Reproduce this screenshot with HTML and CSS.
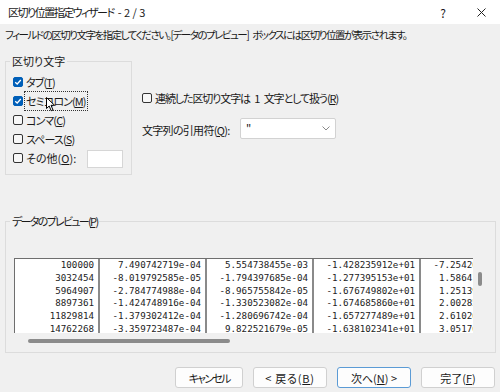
FILE: index.html
```html
<!DOCTYPE html>
<html lang="ja">
<head>
    <meta charset="UTF-8">
    <title>区切り位置指定ウィザード - 2 / 3</title>
    <link rel="stylesheet" href="styles.css">
</head>
<body>
    <div class="dialog">
        <div class="titlebar">
            <span class="title">区切り位置指定ウィザード - 2 / 3</span>
            <span class="tb-btn help">?</span>
            <span class="tb-btn close">
                <svg width="9" height="9" viewBox="0 0 9 9"><path d="M0.5 0.5 L8.5 8.5 M8.5 0.5 L0.5 8.5" stroke="#222" stroke-width="1" fill="none"/></svg>
            </span>
        </div>

        <p class="intro">フィールドの区切り文字を指定してください。[データのプレビュー] ボックスには区切り位置が表示されます。</p>

        <div class="options">
            <fieldset class="group delims">
                <legend>区切り文字</legend>
                <div class="check"><span class="box on"></span><span class="lbl">タブ(<u>T</u>)</span></div>
                <div class="check">
                    <span class="box on"></span><span class="lbl focus">セミコロン(<u>M</u>)</span>
                    <svg class="cursor" width="10" height="15" viewBox="0 0 10 15"><path d="M0.5 0.5 L0.5 11.5 L3.2 9 L5.2 13.8 L7 13 L5 8.3 L8.6 8.3 Z" fill="#fff" stroke="#000" stroke-width="1" stroke-linejoin="round"/></svg>
                </div>
                <div class="check"><span class="box"></span><span class="lbl">コンマ(<u>C</u>)</span></div>
                <div class="check"><span class="box"></span><span class="lbl">スペース(<u>S</u>)</span></div>
                <div class="check"><span class="box"></span><span class="lbl other">その他(<u>O</u>):</span><span class="other-input"></span></div>
            </fieldset>

            <div class="side">
                <div class="check"><span class="box"></span><span class="lbl merge">連続した区切り文字は 1 文字として扱う(<u>R</u>)</span></div>
                <div class="quote-row">
                    <span class="quote-label">文字列の引用符(<u>Q</u>):</span>
                    <div class="combo">
                        <span>"</span>
                        <svg width="8" height="5" viewBox="0 0 8 5"><path d="M0.5 0.5 L4 4 L7.5 0.5" stroke="#8a8a8a" fill="none"/></svg>
                    </div>
                </div>
            </div>
        </div>

        <fieldset class="group preview">
            <legend>データのプレビュー(<u>P</u>)</legend>
            <div class="preview-view">
                <div class="sheet">
                    <div class="col first">
                        <div>100000</div><div>3032454</div><div>5964907</div>
                        <div>8897361</div><div>11829814</div><div>14762268</div>
                    </div>
                    <div class="col">
                        <div>7.490742719e-04</div><div>-8.019792585e-05</div><div>-2.784774988e-04</div>
                        <div>-1.424748916e-04</div><div>-1.379302412e-04</div><div>-3.359723487e-04</div>
                    </div>
                    <div class="col">
                        <div>5.554738455e-03</div><div>-1.794397685e-04</div><div>-8.965755842e-05</div>
                        <div>-1.330523082e-04</div><div>-1.280696742e-04</div><div>9.822521679e-05</div>
                    </div>
                    <div class="col">
                        <div>-1.428235912e+01</div><div>-1.277395153e+01</div><div>-1.676749802e+01</div>
                        <div>-1.674685860e+01</div><div>-1.657277489e+01</div><div>-1.638102341e+01</div>
                    </div>
                    <div class="col">
                        <div>-7.254203851e+00</div><div>1.586417723e+00</div><div>1.251398406e+00</div>
                        <div>2.002857114e+00</div><div>2.610263950e+00</div><div>3.051769428e+00</div>
                    </div>
                </div>
                <div class="vscroll"><div class="thumb"></div></div>
                <div class="hscroll"><div class="thumb"></div></div>
            </div>
        </fieldset>

        <div class="buttons">
            <button class="cancel">キャンセル</button>
            <button class="back">&lt; 戻る(<u>B</u>)</button>
            <button class="default">次へ(<u>N</u>) &gt;</button>
            <button>完了(<u>F</u>)</button>
        </div>
    </div>
</body>
</html>
```

FILE: styles.css
```css
body {
    margin: 0;
    background-color: #f0f0f0;
    font-family: "Noto Sans CJK JP", "Noto Sans", sans-serif;
    font-size: 11px;
    color: #1a1a1a;
    font-feature-settings: "palt";
}
.dialog {
    width: 500px;
    height: 392px;
    display: flex;
    flex-direction: column;
    overflow: hidden;
}

/* title bar */
.titlebar {
    height: 24px;
    background-color: #fff;
    display: flex;
    align-items: center;
    padding-left: 8px;
}
.titlebar .title {
    flex: 1;
    letter-spacing: -1.5px;
    word-spacing: 3px;
}
.tb-btn {
    display: flex;
    align-items: center;
    justify-content: center;
    height: 24px;
}
.tb-btn.help {
    width: 40px;
    font-size: 12px;
}
.tb-btn.close {
    width: 37px;
}

.intro {
    margin: 4px 0 0 5px;
    line-height: 14px;
    white-space: nowrap;
    font-size: 10.5px;
    letter-spacing: -1.5px;
    word-spacing: 3px;
}

/* group boxes */
.group {
    border: 1px solid #dcdcdc;
    margin: 0;
    padding: 0;
    min-width: 0;
}
.group legend {
    padding: 0 2px;
    line-height: 14px;
}

.options {
    display: flex;
    margin-top: 12px;
}
.delims {
    margin-left: 5px;
    width: 127px;
    box-sizing: border-box;
    padding: 4px 0 7px 7px;
}
.delims legend {
    margin-left: -3px;
}
.check {
    position: relative;
    display: flex;
    align-items: center;
    height: 19px;
    gap: 3px;
    white-space: nowrap;
}
.check .lbl {
    letter-spacing: -0.9px;
}
.check .lbl.other {
    letter-spacing: 0;
}
.check .lbl.merge {
    letter-spacing: -1.1px;
    word-spacing: 3px;
}
.box {
    flex-shrink: 0;
    width: 10px;
    height: 10px;
    box-sizing: border-box;
    border: 1px solid #333;
    border-radius: 2px;
    background-color: #f7f7f7;
}
.box.on {
    border-color: #005fb8;
    background-color: #005fb8;
    background-image: url("data:image/svg+xml,%3Csvg xmlns='http://www.w3.org/2000/svg' viewBox='0 0 10 10'%3E%3Cpath d='M2.2 5.2 L4.2 7 L7.8 3' stroke='white' stroke-width='1.3' fill='none'/%3E%3C/svg%3E");
    background-size: 10px 10px;
    background-position: -1px -1px;
}
.focus {
    outline: 1px dotted #333;
    outline-offset: 1px;
}
.cursor {
    position: absolute;
    left: 33px;
    top: 6px;
}
.other-input {
    width: 36px;
    height: 18px;
    box-sizing: border-box;
    margin-left: 8px;
    margin-top: 2px;
    background-color: #fff;
    border: 1px solid #d6d6d6;
}

.side {
    padding: 34px 0 0 10px;
}
.quote-row {
    display: flex;
    align-items: center;
    margin-top: 11px;
}
.quote-label {
    width: 98px;
    padding-top: 2px;
    letter-spacing: -0.7px;
}
.combo {
    width: 96px;
    height: 21px;
    box-sizing: border-box;
    border: 1px solid #d2d2d2;
    border-radius: 2px;
    background-color: #fff;
    display: flex;
    align-items: center;
    justify-content: space-between;
    padding: 0 5px 0 5px;
}

/* preview */
.preview {
    margin: 39px 4px 0 5px;
    padding: 30px 0 4px 8px;
}
.preview legend {
    margin-left: -4px;
    letter-spacing: -1.7px;
}
.preview-view {
    display: grid;
    grid-template-columns: 459px 1fr;
    grid-template-rows: 75px 15px;
}
.sheet {
    display: flex;
    overflow: hidden;
    background-color: #fff;
    border-top: 1px solid #6e6e6e;
    border-left: 1px solid #6e6e6e;
    font-family: "DejaVu Sans Mono", "Liberation Mono", monospace;
    font-feature-settings: normal;
    font-size: 9.2px;
    color: #222;
}
.col {
    flex-shrink: 0;
    width: 107px;
    box-sizing: border-box;
    border-right: 2px solid #8a8a8a;
    padding-right: 4px;
    text-align: right;
    line-height: 12.8px;
}
.col.first {
    width: 85px;
}
.vscroll .thumb {
    margin: 14px 0 0 5px;
    width: 4px;
    height: 14px;
    border-radius: 2px;
    background-color: #8b8b8b;
}
.hscroll .thumb {
    margin: 6px 0 0 14px;
    width: 202px;
    height: 4px;
    border-radius: 2px;
    background-color: #8b8b8b;
}

/* buttons */
.buttons {
    display: flex;
    justify-content: flex-end;
    gap: 10px;
    margin-top: 14px;
    padding-right: 5px;
}
.buttons button {
    width: 74px;
    height: 21px;
    padding: 0;
    font-family: inherit;
    font-size: 11px;
    font-feature-settings: "palt";
    color: #1a1a1a;
    background-color: #fdfdfd;
    border: 1px solid #d0d0d0;
    border-radius: 3px;
}
.buttons button.cancel {
    width: 68px;
    letter-spacing: -1.8px;
}
.buttons button.back {
    letter-spacing: 0.8px;
}
.buttons button.default {
    border-color: #5b9bd5;
}
```
